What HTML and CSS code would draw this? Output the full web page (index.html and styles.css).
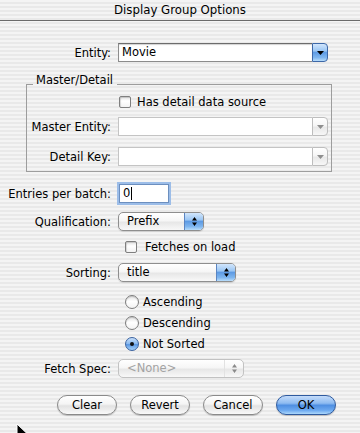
FILE: index.html
```html
<!DOCTYPE html>
<html lang="en">
<head>
    <meta charset="UTF-8">
    <meta name="viewport" content="width=device-width, initial-scale=1.0">
    <title>Display Group Options</title>
    <link rel="stylesheet" href="styles.css">
</head>
<body>

    <div class="window">
        <!-- Title bar -->
        <div class="titlebar">Display Group Options</div>

        <!-- Entity -->
        <div class="row row-entity">
            <span class="label">Entity:</span>
            <div class="combo">
                <span class="combo-field">Movie</span>
                <span class="combo-btn">
                    <svg width="7" height="4" viewBox="0 0 7 4"><path d="M0 0h7L3.5 4z"/></svg>
                </span>
            </div>
        </div>

        <!-- Master / Detail group -->
        <fieldset class="group">
            <legend>Master/Detail</legend>
            <div class="check-row check-detail">
                <span class="checkbox"></span>
                <span>Has detail data source</span>
            </div>
            <div class="row row-master">
                <span class="label">Master Entity:</span>
                <div class="combo disabled">
                    <span class="combo-field"></span>
                    <span class="combo-btn">
                        <svg width="7" height="4" viewBox="0 0 7 4"><path d="M0 0h7L3.5 4z"/></svg>
                    </span>
                </div>
            </div>
            <div class="row row-detail">
                <span class="label">Detail Key:</span>
                <div class="combo disabled">
                    <span class="combo-field"></span>
                    <span class="combo-btn">
                        <svg width="7" height="4" viewBox="0 0 7 4"><path d="M0 0h7L3.5 4z"/></svg>
                    </span>
                </div>
            </div>
        </fieldset>

        <!-- Batch -->
        <div class="row row-batch">
            <span class="label">Entries per batch:</span>
            <div class="textfield">0<span class="caret"></span></div>
        </div>

        <div class="row row-qual">
            <span class="label">Qualification:</span>
            <div class="popup popup-qual">
                <span class="popup-text">Prefix</span>
                <span class="popup-btn">
                    <svg width="5" height="9" viewBox="0 0 5 9"><path d="M2.5 0L5 3.5H0zM0 5.5h5L2.5 9z"/></svg>
                </span>
            </div>
        </div>

        <div class="check-row check-fetch">
            <span class="checkbox"></span>
            <span>Fetches on load</span>
        </div>

        <div class="row row-sort">
            <span class="label">Sorting:</span>
            <div class="popup popup-sort">
                <span class="popup-text">title</span>
                <span class="popup-btn">
                    <svg width="5" height="9" viewBox="0 0 5 9"><path d="M2.5 0L5 3.5H0zM0 5.5h5L2.5 9z"/></svg>
                </span>
            </div>
        </div>

        <div class="radios">
            <div class="radio-row"><span class="radio"></span><span>Ascending</span></div>
            <div class="radio-row"><span class="radio"></span><span>Descending</span></div>
            <div class="radio-row"><span class="radio checked"></span><span>Not Sorted</span></div>
        </div>

        <div class="row row-spec">
            <span class="label">Fetch Spec:</span>
            <div class="popup popup-spec disabled">
                <span class="popup-text">&lt;None&gt;</span>
                <span class="popup-btn">
                    <svg width="5" height="9" viewBox="0 0 5 9"><path d="M2.5 0L5 3.5H0zM0 5.5h5L2.5 9z"/></svg>
                </span>
            </div>
        </div>

        <!-- Buttons -->
        <div class="buttons">
            <button class="btn">Clear</button>
            <button class="btn">Revert</button>
            <button class="btn">Cancel</button>
            <button class="btn btn-default">OK</button>
        </div>

        <!-- mouse pointer -->
        <svg class="cursor" width="13" height="19" viewBox="0 0 13 19">
            <path d="M1 1L1 15L4.5 11.5L7 17L9 16L6.5 10.5L11 10.5Z" fill="#000" stroke="#fff" stroke-width="1"/>
        </svg>
    </div>

</body>
</html>
```

FILE: styles.css
```css
/* Global */
* {
    margin: 0;
    padding: 0;
    box-sizing: border-box;
}

body {
    font-family: 'DejaVu Sans', sans-serif;
    font-size: 11.5px;
    color: #000;
    background: #e9e9e9;
}

.window {
    position: relative;
    width: 360px;
    height: 433px;
    overflow: hidden;
    background: repeating-linear-gradient(to bottom, #f4f4f4 0, #f4f4f4 2px, #e9e9e9 2px, #e9e9e9 4px);
}

.titlebar {
    height: 21px;
    line-height: 20px;
    text-align: center;
    font-size: 11.75px;
    border-bottom: 1px solid #6a6a6a;
}

/* Rows */
.row {
    display: flex;
    align-items: center;
}

.label {
    width: 111px;
    margin-right: 7px;
    text-align: right;
    white-space: nowrap;
}

.row-entity { margin-top: 22px; }

/* Combo box */
.combo {
    display: flex;
    width: 210px;
    height: 19px;
}

.combo-field {
    flex: 1;
    background: #fff;
    border: 1px solid #8c8c8c;
    border-top-color: #6c6c6c;
    border-right: none;
    box-shadow: inset 0 1px 1px rgba(0, 0, 0, 0.18);
    padding-left: 3px;
    line-height: 17px;
}

.combo-btn {
    width: 16px;
    border: 1px solid #3d68a8;
    border-radius: 0 4px 4px 0;
    background: linear-gradient(to bottom, #d2e6fc 0%, #9cc7f4 40%, #5e9be4 50%, #7fb6ef 80%, #b9ddfb 100%);
    display: flex;
    align-items: center;
    justify-content: center;
}

.combo.disabled .combo-field {
    border-color: #c4c4c4;
    box-shadow: none;
}

.combo.disabled .combo-btn {
    border-color: #bdbdbd;
    background: linear-gradient(to bottom, #ffffff 0%, #f5f5f5 45%, #e8e8e8 55%, #f7f7f7 100%);
}

.combo.disabled .combo-btn svg { fill: #8e8e8e; }

/* Group box */
.group {
    margin: 11px 0 0 26px;
    width: 306px;
    border: 1px solid #9d9d9d;
    padding: 0 0 5px 0;
}

.group legend {
    margin-left: 6px;
    padding: 0 4px 8px 3px;
    line-height: 14px;
}

.group .label { width: 84px; }

.check-row {
    display: flex;
    align-items: center;
    height: 14px;
}

.check-detail {
    padding-left: 92px;
    gap: 6px;
}

.row-master { margin-top: 8px; }
.row-detail { margin-top: 11px; }

.checkbox {
    width: 12px;
    height: 12px;
    border: 1px solid #7f7f7f;
    border-radius: 2px;
    background: linear-gradient(to bottom, #e4e4e4 0%, #ffffff 40%, #f2f2f2 100%);
    box-shadow: inset 1px 1px 1px rgba(0, 0, 0, 0.15);
}

/* Batch */
.row-batch { margin-top: 12px; }

.textfield {
    width: 50px;
    height: 19px;
    margin-left: 1px;
    background: #fff;
    border: 1px solid #6c8fbf;
    box-shadow: 0 0 0 2px #9cbde8;
    padding-left: 3px;
    line-height: 17px;
    display: flex;
    align-items: center;
}

.caret {
    width: 1px;
    height: 13px;
    background: #000;
    margin-left: 1px;
}

/* Popups */
.row-qual { margin-top: 9px; }

.popup {
    display: flex;
    height: 19px;
    border: 1px solid #8e8e8e;
    border-radius: 5px;
    overflow: hidden;
    background: linear-gradient(to bottom, #ffffff 0%, #f6f6f6 45%, #e7e7e7 55%, #f8f8f8 100%);
    box-shadow: 0 1px 1px rgba(0, 0, 0, 0.12);
}

.popup-text {
    flex: 1;
    padding-left: 8px;
    line-height: 17px;
}

.popup-btn {
    width: 19px;
    border-left: 1px solid #5b85c2;
    background: linear-gradient(to bottom, #d2e6fc 0%, #9cc7f4 40%, #5e9be4 50%, #7fb6ef 80%, #b9ddfb 100%);
    display: flex;
    align-items: center;
    justify-content: center;
}

.popup-qual { width: 86px; }
.popup-sort { width: 118px; }
.popup-spec { width: 126px; }

.popup.disabled {
    border-color: #c2c2c2;
    box-shadow: none;
}

.popup.disabled .popup-text { color: #a3a3a3; }

.popup.disabled .popup-btn {
    border-left: 1px solid #e2e2e2;
    background: transparent;
}

.popup.disabled .popup-btn svg { fill: #8a8a8a; }

.check-fetch {
    margin-top: 9px;
    padding-left: 125px;
    gap: 8px;
}

.row-sort { margin-top: 9px; }

/* Radios */
.radios {
    margin-top: 13px;
    padding-left: 125px;
    display: flex;
    flex-direction: column;
    gap: 7px;
}

.radio-row {
    display: flex;
    align-items: center;
    gap: 4px;
    height: 14px;
}

.radio {
    width: 14px;
    height: 14px;
    border: 1px solid #7d7d7d;
    border-radius: 50%;
    background: linear-gradient(to bottom, #e2e2e2 0%, #ffffff 45%, #f3f3f3 100%);
    box-shadow: inset 0 1px 1px rgba(0, 0, 0, 0.15);
    display: flex;
    align-items: center;
    justify-content: center;
}

.radio.checked {
    border-color: #3b63a0;
    background: linear-gradient(to bottom, #c6def9 0%, #8fbdf1 45%, #5b98e3 55%, #a6d2fa 100%);
    box-shadow: none;
}

.radio.checked::after {
    content: "";
    width: 4px;
    height: 4px;
    border-radius: 50%;
    background: #111;
}

.row-spec { margin-top: 8px; }

/* Buttons */
.buttons {
    margin-top: 17px;
    padding-right: 24px;
    display: flex;
    justify-content: flex-end;
    gap: 13px;
}

.btn {
    width: 60px;
    height: 20px;
    border: 1px solid #8a8a8a;
    border-radius: 10px;
    font-family: inherit;
    font-size: 11.5px;
    color: #000;
    background: linear-gradient(to bottom, #ffffff 0%, #f4f4f4 45%, #e2e2e2 55%, #f9f9f9 100%);
    box-shadow: 0 1px 1px rgba(0, 0, 0, 0.2);
}

.btn-default {
    border-color: #2f5a9e;
    background: linear-gradient(to bottom, #c4dcfa 0%, #8ebbf1 40%, #4f8fe2 52%, #6eaaf0 80%, #acd8fc 100%);
}

.cursor {
    position: absolute;
    left: 16px;
    top: 423px;
}
```
